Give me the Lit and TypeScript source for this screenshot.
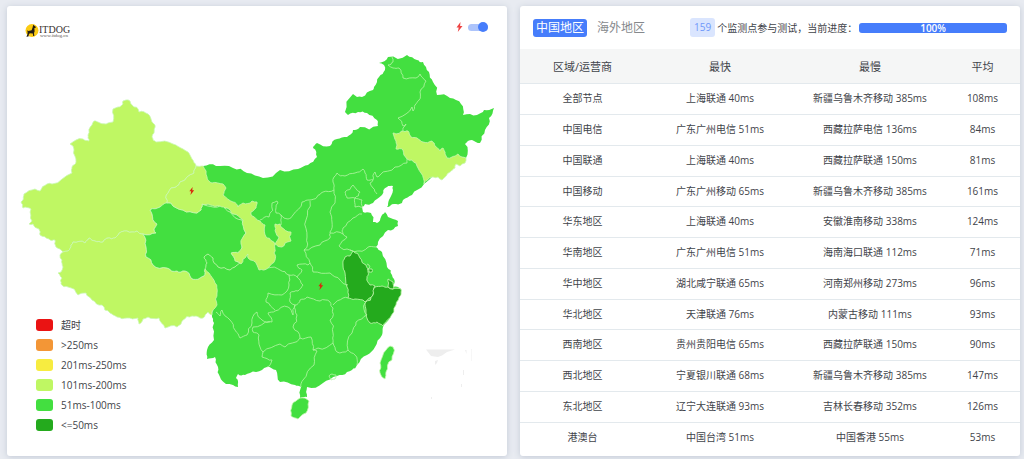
import { LitElement, html, svg, css } from "lit";
import { customElement, state } from "lit/decorators.js";

type Region = { cls: string; d: string };

/* Mainland block that carries the 51ms-100ms colour. */
const MAINLAND =
  "203,166 216,166 233,168 247,173 263,178 280,170 298,169 308,165 317,157 313,148 317,143 330,146 337,139 347,137 353,130 360,127 378,126 377,120 367,113 358,112 348,115 345,112 353,94 362,97 373,90 374,87 379,77 385,70 384,65 379,63 388,57 407,55 417,60 423,62 429,72 433,82 437,95 450,98 461,104 463,115 477,115 484,110 494,108 489,118 485,130 480,143 472,140 465,144 466,158 440,163 424,184 412,195 403,200 402,203 394,204 387,207 389,200 393,190 393,186 387,187 382,195 373,203 365,204 362,207 363,212 371,213 373,222 377,223 381,217 385,212 388,217 398,221 398,226 388,230 378,242 376,247 382,252 387,267 392,275 394,279 393,287 401,289 401,295 396,305 390,318 383,327 382,335 375,347 367,355 357,365 352,370 347,372 337,376 323,383 307,387 307,397 300,398 301,387 295,385 280,382 276,370 267,367 262,370 250,373 245,375 238,374 236,378 238,387 233,385 226,384 220,377 218,367 215,357 207,359 207,350 214,340 214,323 212,315 210,285 200,270 160,240 165,205 195,190";

const REGIONS: Region[] = [
  { cls: "lime", d: "123,101 126,100 130,101 132,105 139,112 148,114 152,122 155,125 154,133 152,137 156,142 173,144 183,149 188,152 192,159 196,166 194,173 187,177 180,182 176,187 171,188 168,193 167,203 160,207 150,210 152,214 157,224 154,229 156,233 143,234 137,231 127,231 118,235 115,238 108,238 103,242 95,241 89,238 85,243 73,242 71,245 68,251 63,252 56,247 55,240 49,239 40,235 39,229 33,224 29,224 32,221 31,209 23,208 21,202 23,200 24,194 35,189 40,191 47,184 52,184 72,173 72,167 76,162 74,150 73,146 70,144 83,139 89,141 88,135 92,125 94,121 100,123 108,123 113,122 113,109 118,107 123,104" },
  { cls: "lime", d: "63,252 68,251 71,245 73,242 85,243 89,238 95,241 103,242 108,238 115,238 118,235 127,231 137,231 143,234 146,247 146,257 153,265 167,268 177,271 185,271 191,278 200,278 204,276 205,269 209,273 215,283 217,293 217,305 212,315 208,312 203,318 200,318 192,316 183,320 177,327 165,328 159,318 148,317 143,319 139,324 138,318 127,318 117,317 110,313 102,305 92,300 86,293 78,295 68,287 61,284 62,278 58,273 61,272 63,267 62,260 60,255" },
  { cls: "green", d: "143,234 156,233 154,229 157,224 152,214 150,210 160,207 171,203 183,210 197,213 201,210 202,204 213,207 222,205 230,212 242,220 246,233 242,248 239,254 232,253 235,259 240,263 235,267 230,270 218,267 213,258 208,254 204,257 207,263 205,269 204,276 200,278 191,278 185,271 177,271 167,268 153,265 146,257 146,247" },
  { cls: "lime", d: "196,166 203,166 207,177 212,183 223,184 226,188 223,195 233,202 238,207 243,203 252,201 257,202 256,208 251,212 252,216 260,221 265,225 266,237 272,241 275,244 274,253 275,260 268,268 259,270 257,265 248,258 248,254 243,259 241,264 235,261 231,253 238,253 242,248 241,244 246,233 243,220 233,214 227,208 220,206 210,205 202,204 201,210 197,213 183,210 171,203 167,203 168,193 171,188 176,187 180,182 187,177 194,173" },
  { cls: "lime", d: "275,224 280,224 281,227 291,232 291,241 285,243 282,247 275,244 279,237 276,233" },
  { cls: "lime", d: "393,133 396,134 402,131 408,131 411,137 417,138 423,142 432,141 435,146 440,151 443,148 445,154 447,158 452,157 458,154 462,157 466,158 465,163 460,166 456,164 455,168 450,172 442,180 438,177 433,177 429,178 424,184 421,173 418,168 412,160 407,159 403,150 396,149 396,141" },
  { cls: "dark", d: "343,265 345,257 350,256 353,251 360,258 366,265 368,272 367,278 370,285 375,286 373,295 365,302 355,299 348,298 347,287 345,273" },
  { cls: "dark", d: "375,287 382,286 388,287 393,289 401,289 401,295 396,305 390,318 383,326 377,322 370,323 366,310 365,303 373,295" },
  { cls: "dark", d: "388,279 393,282 393,289 388,287" },
  { cls: "dark", d: "368,269 372,269 372,272 369,272" },
  { cls: "green", d: "300,398 309,401 306,413 298,419 291,416 292,405" },
  { cls: "green", d: "390,346 393,347 392,360 386,372 385,379 380,373 380,363 386,350" },
];

const BORDERS = [
  "392,57 393,62 388,65 393,68 399,68 403,78 416,78 420,74 426,81 420,92 419,100 415,105 413,111 412,107 398,118 403,126 406,124 403,128 403,131",
  "407,159 407,163 395,167 380,175 377,177 375,172 373,180 370,183 373,188 377,194",
  "373,180 367,180 365,173 363,169 355,173 345,176 337,173 333,182 334,190 323,192 317,197 310,200 302,202 293,215 288,219 281,215 281,225",
  "260,220 269,217 272,203 277,201 278,203 276,213 281,215",
  "310,201 306,220 307,237 304,250 320,245 330,238 330,232 332,222 330,212 335,203 334,190",
  "330,233 343,234 347,237 339,246 350,250 353,251",
  "304,250 310,263 313,272 330,273 340,280 348,285",
  "343,234 343,228 353,218 362,214",
  "350,250 360,251 367,248 376,247",
  "345,192 353,185 360,192 355,198 347,198 345,192",
  "355,198 362,200 363,207 355,207 355,198",
  "268,268 280,270 289,275 297,277 302,270 297,265 308,265 310,263",
  "289,275 289,285 282,295 268,293 266,302 275,310",
  "297,277 303,285 298,291 290,293 290,302 295,305 293,315 288,307 275,311 268,313 272,322 262,320 257,312 252,323 247,335 240,338 235,330 230,320 222,310 220,316 216,312",
  "270,322 253,327 253,332 259,335 260,347 263,352 280,344 285,347 300,338 293,327 297,315 295,305 300,300 307,297 320,301 330,302 333,308 330,320 333,333 333,343 318,348 313,350 311,337 300,338",
  "263,352 262,357 272,360 267,367",
  "313,350 317,351 314,365 303,380 301,387",
  "333,305 343,298 348,298",
  "365,303 367,315 356,322 352,333 348,350 337,352 333,343",
  "348,350 355,355 357,365",
  "329,376 332,374 336,375 335,379 331,380 329,376",
  "367,264 370,267 368,269",
];

/* Bends each straight run a little; the bend depends only on its two ends, so shared borders agree. */
function ragged(points: string, close: boolean): string {
  const pts = points.split(" ").map((p) => p.split(",").map(Number));
  const out: string[] = [];
  const bend = (a: number[], b: number[], depth: number) => {
    const len = Math.hypot(b[0] - a[0], b[1] - a[1]);
    if (depth === 0 || len < 3) return;
    const [p, q] = a[0] < b[0] || (a[0] === b[0] && a[1] < b[1]) ? [a, b] : [b, a];
    const n = Math.sin(p[0] * 12.9 + p[1] * 78.2 + q[0] * 37.7 + q[1] * 11.3) * 43758.5;
    const k = (n - Math.floor(n) - 0.5) * 0.34;
    const m = [(p[0] + q[0]) / 2 - (q[1] - p[1]) * k, (p[1] + q[1]) / 2 + (q[0] - p[0]) * k];
    bend(a, m, depth - 1);
    out.push(`${m[0].toFixed(1)},${m[1].toFixed(1)}`);
    bend(m, b, depth - 1);
  };
  const last = close ? pts.length : pts.length - 1;
  for (let i = 0; i < last; i++) {
    const a = pts[i];
    const b = pts[(i + 1) % pts.length];
    out.push(a.join(","));
    bend(a, b, 2);
  }
  if (!close) out.push(pts[pts.length - 1].join(","));
  return `M${out.join(" ")}${close ? "Z" : ""}`;
}

const LEGEND = [
  ["timeout", "超时"],
  ["orange", ">250ms"],
  ["yellow", "201ms-250ms"],
  ["lime", "101ms-200ms"],
  ["green", "51ms-100ms"],
  ["dark", "<=50ms"],
];

const ROWS = [
  ["全部节点", "上海联通 40ms", "新疆乌鲁木齐移动 385ms", "108ms"],
  ["中国电信", "广东广州电信 51ms", "西藏拉萨电信 136ms", "84ms"],
  ["中国联通", "上海联通 40ms", "西藏拉萨联通 150ms", "81ms"],
  ["中国移动", "广东广州移动 65ms", "新疆乌鲁木齐移动 385ms", "161ms"],
  ["华东地区", "上海联通 40ms", "安徽淮南移动 338ms", "124ms"],
  ["华南地区", "广东广州电信 51ms", "海南海口联通 112ms", "71ms"],
  ["华中地区", "湖北咸宁联通 65ms", "河南郑州移动 273ms", "96ms"],
  ["华北地区", "天津联通 76ms", "内蒙古移动 111ms", "93ms"],
  ["西南地区", "贵州贵阳电信 65ms", "西藏拉萨联通 150ms", "90ms"],
  ["西北地区", "宁夏银川联通 68ms", "新疆乌鲁木齐移动 385ms", "147ms"],
  ["东北地区", "辽宁大连联通 93ms", "吉林长春移动 352ms", "126ms"],
  ["港澳台", "中国台湾 51ms", "中国香港 55ms", "53ms"],
];

const BOLT = "M4.5,0 L0.5,5.4 H2.7 L1.8,10 L6.5,4 H4.1 Z";

@customElement("latency-map")
export class LatencyMap extends LitElement {
  @state() private flash = true;

  static styles = css`
    :host {
      display: grid;
      grid-template: auto / 1fr;
      color: #3f444a;
      font-size: 10px;
    }
    .map, .bar, .legend { grid-area: 1 / 1; }
    .map { display: block; width: 100%; height: auto; }
    .bar {
      display: flex;
      justify-content: space-between;
      align-self: start;
      padding: 15px 19px 0 18px;
    }
    .logo { display: block; width: 50px; height: 20px; }
    .name { font: 10px "Liberation Serif", serif; fill: #38322f; }
    .site { font: 5px "Liberation Serif", serif; fill: #5b5451; }
    .flash { display: flex; align-items: center; gap: 5px; height: 12px; }
    .flash svg { width: 7px; height: 10px; fill: #ee4444; }
    .switch {
      appearance: none;
      box-sizing: border-box;
      display: flex;
      justify-content: flex-start;
      align-items: center;
      width: 20px;
      height: 7px;
      margin: 0;
      border-radius: 4px;
      background: #cfd3da;
    }
    .switch::before {
      content: "";
      flex: none;
      width: 10px;
      height: 10px;
      border-radius: 50%;
      background: #8c939e;
    }
    .switch:checked { justify-content: flex-end; background: #adc4fb; }
    .switch:checked::before { background: #467dfb; }
    .legend {
      display: flex;
      flex-direction: column;
      gap: 8px;
      align-self: end;
      justify-self: start;
      margin: 0;
      padding: 0 0 25px 29px;
      list-style: none;
    }
    .legend li { display: flex; align-items: center; gap: 8px; height: 12px; line-height: 12px; }
    .swatch { width: 17px; height: 12px; border-radius: 3px; }
    .swatch.timeout { background: #ea1313; }
    .swatch.orange { background: #f39636; }
    .swatch.yellow { background: #f7ec40; }
    .swatch.lime { background: #bff763; }
    .swatch.green { background: #43df40; }
    .swatch.dark { background: #24aa1d; }
    .region { stroke: #c9f7b4; stroke-width: 0.8; stroke-linejoin: round; }
    .region.lime { fill: #bff763; }
    .region.green { fill: #43df40; }
    .region.dark { fill: #24aa1d; }
    .land { fill: #43df40; }
    .border { fill: none; stroke: #b5f5a4; stroke-width: 0.8; stroke-linejoin: round; }
    .spark { fill: #d82a0c; }
    .sea { fill: #eeeeee; }
  `;

  private toggle(e: Event) {
    this.flash = (e.target as HTMLInputElement).checked;
  }

  render() {
    return html`
      <svg class="map" viewBox="7 6 500 450" role="img" aria-label="中国地区">
        <path class="land" d=${ragged(MAINLAND, true)}></path>
        ${REGIONS.map((r) => svg`<path class="region ${r.cls}" d=${ragged(r.d, true)}></path>`)}
        ${BORDERS.map((b) => svg`<path class="border" d=${ragged(b, false)}></path>`)}
        <path class="sea" d="M426,349.5 H455 L447,352 442,355.5 438,357 431,356 Z M435,361 l3,-1 -1,3 -2,2 Z M465,350 h1.5 v4 Z M463,370 h1 v5 h-1 Z M461,384 h1 v3 h-1 Z M431,397 h1 v2 h-1 Z M471,349 h.5 v12 h-.5 Z"></path>
        ${this.flash
          ? svg`<path class="spark" transform="translate(189 187) scale(.8)" d=${BOLT}></path>
              <path class="spark" transform="translate(318 282) scale(.8)" d=${BOLT}></path>`
          : ""}
      </svg>
      <div class="bar">
        <svg class="logo" viewBox="25 21 50 20" role="img" aria-label="ITDOG">
          <circle cx="32" cy="30.5" r="6.5" fill="#fbcb13"></circle>
          <path fill="#221c14" d="M33.3,24.5 L34,25.6 36,27 35.6,27.8 34.4,27.9 34.6,31.5 34,33 34.3,36 33.2,36 32.8,33.5 29.8,33.3 28.8,34.6 28.5,36.6 26.4,36.8 27.4,34.5 27.6,32.2 27.2,30.2 28.4,31 31.6,30.3 32.6,27.4 Z"></path>
          <text class="name" x="39" y="33">ITDOG</text>
          <text class="site" x="40" y="37">www.itdog.cn</text>
        </svg>
        <label class="flash">
          <svg viewBox="0 0 7 10" aria-hidden="true"><path d=${BOLT}></path></svg>
          <input class="switch" type="checkbox" aria-label="闪电" .checked=${this.flash} @change=${this.toggle} />
        </label>
      </div>
      <ul class="legend">
        ${LEGEND.map(([cls, label]) => html`<li><span class="swatch ${cls}"></span><span>${label}</span></li>`)}
      </ul>
    `;
  }
}

@customElement("latency-table")
export class LatencyTable extends LitElement {
  @state() private tab = 0;
  private progress = 100;

  static styles = css`
    :host { display: block; color: #3f444a; font-size: 10px; }
    .top {
      display: flex;
      align-items: center;
      gap: 7px;
      height: 43px;
      padding: 0 13px;
    }
    .tab {
      height: 18px;
      padding: 0 3px;
      border: 0;
      border-radius: 3px;
      background: none;
      color: #85888c;
      font: inherit;
      font-size: 12px;
      line-height: 18px;
      white-space: nowrap;
    }
    .tab.active { background: #467dfb; color: #ffffff; }
    .status { display: flex; flex: 1; align-items: center; justify-content: flex-end; gap: 2px; white-space: nowrap; }
    .count {
      padding: 0 4px;
      border-radius: 3px;
      background: #dae5fe;
      color: #6f98fa;
      font-size: 10px;
      line-height: 19px;
    }
    .track { width: 42%; border-radius: 3px; background: #e9ecef; }
    .fill {
      border-radius: 3px;
      background: #467dfb;
      color: #ffffff;
      font-family: "Open Sans", sans-serif;
      font-weight: 600;
      line-height: 10px;
      text-align: center;
    }
    table { width: 100%; border-collapse: collapse; table-layout: fixed; }
    th, td { box-sizing: border-box; padding: 0; text-align: center; border-bottom: 1px solid #e3e9ed; }
    th { height: 34px; background: #f5f6f6; font-size: 11px; font-weight: 400; }
    td { height: 31px; padding-bottom: 1px; line-height: 16px; }
    tr:nth-child(4n) td { height: 30px; }
    tbody tr:last-child td { border-bottom: 0; }
    .area { width: 25%; }
    .avg { width: 15%; }
  `;

  render() {
    return html`
      <div class="top">
        ${["中国地区", "海外地区"].map(
          (name, i) => html`<button class="tab ${this.tab === i ? "active" : ""}" @click=${() => (this.tab = i)}>${name}</button>`
        )}
        <div class="status">
          <span class="count">159</span>
          <span>个监测点参与测试，当前进度：</span>
          <div class="track" role="progressbar" aria-label="当前进度" aria-valuenow=${this.progress}>
            <div class="fill" style="width:${this.progress}%">${this.progress}%</div>
          </div>
        </div>
      </div>
      <table>
        <thead>
          <tr><th class="area">区域/运营商</th><th>最快</th><th>最慢</th><th class="avg">平均</th></tr>
        </thead>
        <tbody>
          ${ROWS.map((row) => html`<tr>${row.map((cell) => html`<td>${cell}</td>`)}</tr>`)}
        </tbody>
      </table>
    `;
  }
}

@customElement("app-root")
export class AppRoot extends LitElement {
  static styles = css`
    :host {
      box-sizing: border-box;
      display: grid;
      grid-template-columns: 1fr 1fr;
      gap: 13px;
      min-height: 100vh;
      padding: 6px 4px 3px 7px;
      background: #e8ebf1;
      font-family: "Open Sans", "Noto Sans CJK SC", sans-serif;
    }
    .card {
      overflow: hidden;
      border-radius: 3px;
      background: #ffffff;
      box-shadow: 0 1px 6px #c3cad6;
    }
  `;

  render() {
    return html`
      <latency-map class="card"></latency-map>
      <latency-table class="card"></latency-table>
    `;
  }
}
